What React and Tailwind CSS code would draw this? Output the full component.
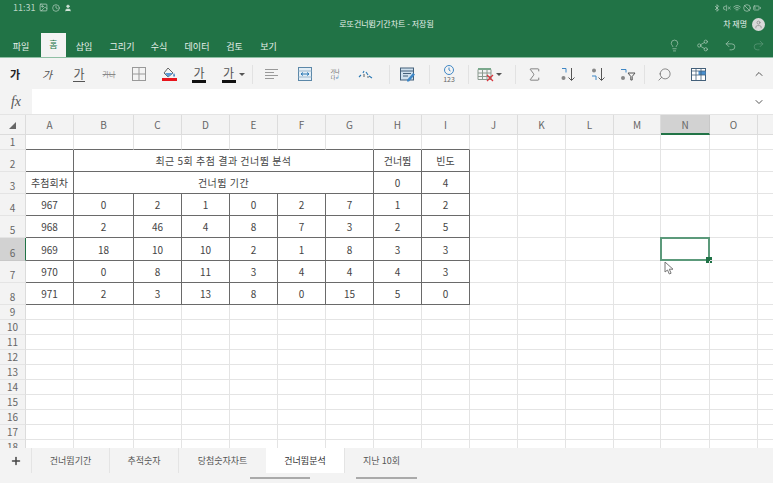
import { Lightbulb, Share2, Undo2, Redo2, ChevronUp, ChevronDown, Search, Sigma, Plus, Image, User, Bluetooth, VolumeX, Wifi, Ban, BatteryLow, Clock } from "lucide-react";

const font = { fontFamily: '"Noto Sans CJK KR", "Noto Sans", sans-serif' };

const COLS = ["A", "B", "C", "D", "E", "F", "G", "H", "I", "J", "K", "L", "M", "N", "O", "P"];
const ROW_H = ["h-[15px]", "h-[22px]", "h-[22px]", "h-[22px]", "h-[22px]", "h-[23px]", "h-[22px]", "h-[22px]"];

const TABLE = {
  2: { A: "", H: "건너뜀", I: "빈도" },
  3: { A: "추첨회차", H: "0", I: "4" },
  4: ["967", "0", "2", "1", "0", "2", "7", "1", "2"],
  5: ["968", "2", "46", "4", "8", "7", "3", "2", "5"],
  6: ["969", "18", "10", "10", "2", "1", "8", "3", "3"],
  7: ["970", "0", "8", "11", "3", "4", "4", "4", "3"],
  8: ["971", "2", "3", "13", "8", "0", "15", "5", "0"],
};

function cellText(r, ci) {
  const t = TABLE[r];
  if (!t) return "";
  if (Array.isArray(t)) return t[ci] || "";
  return t[COLS[ci]] || "";
}

function Cell({ r, ci }) {
  const inTable = r >= 2 && r <= 8 && ci <= 8;
  const right = inTable ? "border-r-[#6a6a6a]" : "border-r-[#e4e4e4]";
  const bottom = inTable || (r === 1 && ci <= 8) ? "border-b-[#6a6a6a]" : "border-b-[#e4e4e4]";
  const active = r === 6 && ci === 13;
  return (
    <div className={`relative flex items-center justify-center border-r border-b text-[10px] text-[#444] ${right} ${bottom}`}>
      {cellText(r, ci)}
      {active && (
        <div className="absolute -left-px -top-px -right-px -bottom-px border-2 border-[#5c9a7b]">
          <div className="absolute -right-[4px] -bottom-[4px] w-[6px] h-[6px] bg-[#1f7246]" />
        </div>
      )}
    </div>
  );
}

function RowHead({ n, h }) {
  const sel = n === 6;
  return (
    <div className={`flex items-end justify-center border-r border-b text-[10px] leading-[14px] text-[#666] ${h} ${sel ? "bg-[#d2d2d2] border-r-[#217346] border-b-[#c8c8c8]" : "bg-[#f3f3f3] border-r-[#dcdcdc] border-b-[#e4e4e4]"}`}>
      {n}
    </div>
  );
}

function Btn({ children, w = "w-[30px]" }) {
  return <div className={`${w} h-full shrink-0 flex items-center justify-center`}>{children}</div>;
}

function Sep() {
  return <div className="w-px h-[19px] bg-[#e2e2e2] shrink-0" />;
}

function ColorGa({ color }) {
  return (
    <div className="flex flex-col items-center">
      <span className="text-[12px] leading-[13px] text-[#555]">가</span>
      <div className="w-[14px] h-[3px] mt-px" style={{ background: color }} />
    </div>
  );
}

function Ribbon() {
  return (
    <div className="h-[31px] bg-[#f3f3f3] flex items-center shrink-0 pt-px">
      <Btn><span className="text-[11px] font-bold text-[#222]">가</span></Btn>
      <Btn w="w-[34px]"><span className="text-[11px] italic text-[#555]">가</span></Btn>
      <Btn><span className="text-[12px] leading-[14px] text-[#555] border-b border-[#555]">가</span></Btn>
      <Btn><span className="text-[7px] text-[#888] line-through">가나</span></Btn>
      <Btn>
        <svg width="14" height="14" viewBox="0 0 14 14" fill="none" stroke="#999" strokeWidth="1"><rect x="0.5" y="0.5" width="13" height="13" /><path d="M7 .5v13M.5 7h13" /></svg>
      </Btn>
      <Btn>
        <div className="flex flex-col items-center">
          <svg width="14" height="11" viewBox="0 0 14 11" fill="none"><path d="M6 1 2 6l4 4 5-4z" stroke="#666" /><path d="M12 6c1 2 1.500 3 0 4-1-1-1-2 0-4z" fill="#3a7fc1" /><path d="M3 6h8l-5 4z" fill="#5b9bd5" /></svg>
          <div className="w-[15px] h-[3px] bg-[#e8141c]" />
        </div>
      </Btn>
      <Btn><ColorGa color="#111" /></Btn>
      <Btn w="w-[38px]">
        <ColorGa color="#111" />
        <span className="ml-[3px] w-0 h-0 border-l-[3px] border-r-[3px] border-t-[3px] border-l-transparent border-r-transparent border-t-[#555]" />
      </Btn>
      <Sep />
      <Btn w="w-[37px]">
        <svg width="15" height="13" viewBox="0 0 15 13" stroke="#999" strokeWidth="1"><path d="M1 1.500h13M1 4.500h9M1 7.500h13M1 10.500h9" /></svg>
      </Btn>
      <Btn>
        <svg width="14" height="14" viewBox="0 0 14 14" fill="none"><rect x=".5" y=".5" width="13" height="13" stroke="#5b87a8" fill="#e3eef6" /><path d="M.5 4h13M.5 10h13" stroke="#9db8cc" /><path d="M3 7h8M3 7l2-1.500M3 7l2 1.500M11 7 9 5.500M11 7 9 8.500" stroke="#2b79b5" /></svg>
      </Btn>
      <Btn>
        <div className="flex flex-col items-center text-[5px] leading-[6px] text-[#555]">
          <span>가나</span>
          <span>다<span className="text-[#2b79b5]">↲</span></span>
        </div>
      </Btn>
      <Btn>
        <svg width="15" height="11" viewBox="0 0 15 11" fill="none" strokeWidth="1.100"><path d="M1 8 3 6M5 4l1-2" stroke="#2b79b5" /><path d="M8 3l2 3M11 7l3 2" stroke="#2b79b5" /><path d="M6 8V5M9 8h2" stroke="#666" /></svg>
      </Btn>
      <div className="w-[9px] shrink-0" />
      <Sep />
      <Btn w="w-[34px]">
        <svg width="15" height="15" viewBox="0 0 15 15" fill="none"><rect x=".5" y="1" width="13" height="12" fill="#cfe0ee" stroke="#44607a" /><path d="M.5 4h13" stroke="#44607a" /><path d="M3 6.500h8M3 9h5" stroke="#44607a" /><path d="M7 13l6-7 2 1.500-6 7H7z" fill="#3f87c5" /></svg>
      </Btn>
      <div className="w-[5px] shrink-0" />
      <Sep />
      <Btn w="w-[38px]">
        <div className="relative w-[16px] h-[19px] flex flex-col items-center">
          <svg width="12" height="10" viewBox="0 0 12 10" fill="none" stroke="#3f87c5"><circle cx="6" cy="5" r="4.500" /><path d="M6 2.500V5l1.500 1" /></svg>
          <span className="text-[7px] leading-[8px] text-[#666]">123</span>
        </div>
      </Btn>
      <Sep />
      <Btn w="w-[40px]">
        <svg width="17" height="15" viewBox="0 0 17 15" fill="none"><path d="M1 2.500h13v10H1zM1 6h13M1 9.500h13M5.500 2.500v10M10 2.500v10" stroke="#8a9a8f" /><path d="M1 1h13v2H1z" fill="#7aa88c" /><path d="m10 8 6 6m0-6-6 6" stroke="#d9363e" strokeWidth="1.300" /></svg>
        <span className="ml-[2px] w-0 h-0 border-l-[3px] border-r-[3px] border-t-[3px] border-l-transparent border-r-transparent border-t-[#555]" />
      </Btn>
      <div className="w-[6px] shrink-0" />
      <Sep />
      <Btn w="w-[36px]"><Sigma size={17} strokeWidth={1} color="#555" /></Btn>
      <Btn>
        <svg width="15" height="15" viewBox="0 0 15 15" fill="none"><path d="M11.500 1v12M8.500 10.500l3 3 3-3" stroke="#555" /><path d="M2 1.500h4v4" stroke="#3f87c5" /><circle cx="3.500" cy="11" r="2" fill="#888" /></svg>
      </Btn>
      <Btn>
        <svg width="15" height="15" viewBox="0 0 15 15" fill="none"><path d="M11.500 1v12M8.500 10.500l3 3 3-3" stroke="#555" /><circle cx="4" cy="3.500" r="2" fill="#888" /><path d="M2 9h4v4" stroke="#3f87c5" /></svg>
      </Btn>
      <Btn w="w-[32px]">
        <svg width="16" height="13" viewBox="0 0 16 13" fill="none"><path d="M1 1.500h5v3" stroke="#3f87c5" /><circle cx="3" cy="10" r="2" fill="#888" /><path d="M8 5h7l-2.800 3.500V12h-1.400V8.500z" stroke="#555" /></svg>
      </Btn>
      <Sep />
      <Btn w="w-[38px]"><Search size={15} strokeWidth={1.200} color="#666" className="-scale-x-100" /></Btn>
      <Btn>
        <svg width="15" height="13" viewBox="0 0 15 13" fill="none"><rect x=".5" y=".5" width="14" height="12" fill="#fff" stroke="#44607a" /><rect x="7.500" y="3" width="7" height="4" fill="#4a90d0" /><path d="M.5 3h14M.5 7h14M5 .5v12M10 .5v12" stroke="#44607a" strokeWidth=".8" /></svg>
      </Btn>
      <div className="flex-1" />
      <ChevronUp size={12} color="#555" className="mr-[8px]" />
    </div>
  );
}

export default function App() {
  const tabs = [
    ["w-[78px]", "건너뜀기간"],
    ["w-[69px]", "추적숫자"],
    ["w-[88px]", "당첨숫자차트"],
    ["w-[78px]", "건너뜀분석"],
    ["w-[74px]", "지난 10회"],
  ];
  return (
    <div className="relative w-[773px] h-[483px] overflow-hidden flex flex-col bg-white" style={font}>
      <div className="h-[58px] bg-[#217346] shrink-0 flex flex-col text-[#e6f0ea] border-b border-b-[#8fbfa4]">
        <div className="h-[15px] flex items-center justify-between pl-[13px] pr-[12px] text-[9px] text-[#b9d3c4]">
          <div className="flex items-center gap-[4px]">
            <span>11:31</span>
            <Image size={9} />
            <Clock size={8} />
            <User size={8} fill="#d6e6dc" />
          </div>
          <div className="flex items-center gap-[2px]">
            <Bluetooth size={8} />
            <VolumeX size={8} />
            <Wifi size={8} />
            <Ban size={8} />
            <BatteryLow size={8} />
          </div>
        </div>
        <div className="h-[18px] relative flex items-center justify-end pr-[8px] text-[8px]">
          <span className="absolute left-0 right-0 text-center">로또건너뜀기간차트 - 저장됨</span>
          <span className="relative mr-[5px]">차 재명</span>
          <div className="relative w-[13px] h-[13px] rounded-full bg-[#d9d9d9] flex items-center justify-center">
            <User size={9} color="#8a8a8a" />
          </div>
        </div>
        <div className="h-[24px] flex items-end text-[9px]">
          <div className="w-[7px]" />
          <div className="w-[28px] h-[17px] text-center">파일</div>
          <div className="ml-[6px] w-[25px] h-[24px] bg-[#f3f3f3] text-[#217346] flex items-center justify-center">홈</div>
          <div className="w-[36px] h-[17px] text-center">삽입</div>
          <div className="w-[40px] h-[17px] text-center">그리기</div>
          <div className="w-[34px] h-[17px] text-center">수식</div>
          <div className="w-[42px] h-[17px] text-center">데이터</div>
          <div className="w-[33px] h-[17px] text-center">검토</div>
          <div className="w-[35px] h-[17px] text-center">보기</div>
          <div className="flex-1" />
          <div className="h-[24px] flex items-center gap-[15px] pr-[8px] text-[#a9cbb7]">
            <Lightbulb size={13} strokeWidth={1.300} />
            <Share2 size={13} strokeWidth={1.300} />
            <Undo2 size={13} strokeWidth={1.300} />
            <Redo2 size={13} strokeWidth={1.300} color="#5f9a7b" />
          </div>
        </div>
      </div>

      <Ribbon />

      <div className="h-[26px] shrink-0 flex items-stretch bg-white border-b border-[#e4e4e4]">
        <div className="w-[32px] bg-[#f3f3f3] flex items-center justify-center text-[14px] italic text-[#555]" style={{ fontFamily: '"Liberation Serif", serif' }}>fx</div>
        <div className="flex-1" />
        <div className="w-[28px] flex items-center justify-center">
          <ChevronDown size={12} color="#555" />
        </div>
      </div>

      <div className="flex-1 overflow-hidden">
        <div className="grid grid-cols-[26px_48px_60px_48px_48px_48px_48px_48px_48px_48px_48px_48px_48px_47px_49px_48px_48px] grid-rows-[20px]">
          <div className="bg-[#f3f3f3] border-r border-b border-[#dcdcdc] flex items-end justify-center pb-[5px]">
            <svg width="7" height="7" viewBox="0 0 7 7"><path d="M7 0v7H0z" fill="#666" /></svg>
          </div>
          {COLS.map((c) => (
            <div key={c} className={`flex items-center justify-center text-[10px] text-[#666] border-r ${c === "N" ? "bg-[#d2d2d2] border-b-2 border-b-[#217346] border-r-[#c8c8c8]" : "bg-[#f3f3f3] border-b border-[#dcdcdc]"}`}>{c === "P" ? "" : c}</div>
          ))}
        </div>
        <div className="grid grid-cols-[26px_48px_60px_48px_48px_48px_48px_48px_48px_48px_48px_48px_48px_47px_49px_48px_48px]">
          {Array.from({ length: 18 }).map((_, i) => {
            const r = i + 1;
            const h = ROW_H[i] || "h-[15px]";
            if (r === 2 || r === 3) {
              return [
                <RowHead key={`h${r}`} n={r} h={h} />,
                <Cell key={`a${r}`} r={r} ci={0} />,
                <div key={`m${r}`} className="col-span-6 flex items-center justify-center text-[10px] tracking-[0.5px] text-[#444] border-r border-b border-[#6a6a6a]">
                  {r === 2 ? "최근 5회 추첨 결과 건너뜀 분석" : "건너뜀 기간"}
                </div>,
                ...COLS.slice(7).map((c, j) => <Cell key={`${r}${c}`} r={r} ci={j + 7} />),
              ];
            }
            return [
              <RowHead key={`h${r}`} n={r} h={h} />,
              ...COLS.map((c, j) => <Cell key={`${r}${c}`} r={r} ci={j} />),
            ];
          })}
        </div>
      </div>

      <div className="absolute left-[664px] top-[261px]">
        <svg width="11" height="14" viewBox="0 0 11 14" fill="#fff" stroke="#777" strokeWidth="1"><path d="M1 1v10l2.500-2 1.800 4 1.800-.8-1.800-4H9z" /></svg>
      </div>

      <div className="h-[35px] shrink-0 bg-[#f3f3f3] relative flex items-start text-[9px] text-[#555]">
        <div className="w-[31px] h-[25px] flex items-center justify-center">
          <Plus size={12} strokeWidth={3} color="#444" />
        </div>
        {tabs.map(([w, t], i) => (
          <div key={t} className={`${w} h-[25px] flex items-center justify-center ${i === 3 ? "bg-white text-[#333]" : "border-l border-[#e4e4e4]"}`}>{t}</div>
        ))}
        <div className="absolute left-[250px] top-[29px] w-[60px] h-[2px] bg-[#aaa]" />
        <div className="absolute left-[356px] top-[29px] w-[61px] h-[2px] bg-[#aaa]" />
      </div>
    </div>
  );
}
